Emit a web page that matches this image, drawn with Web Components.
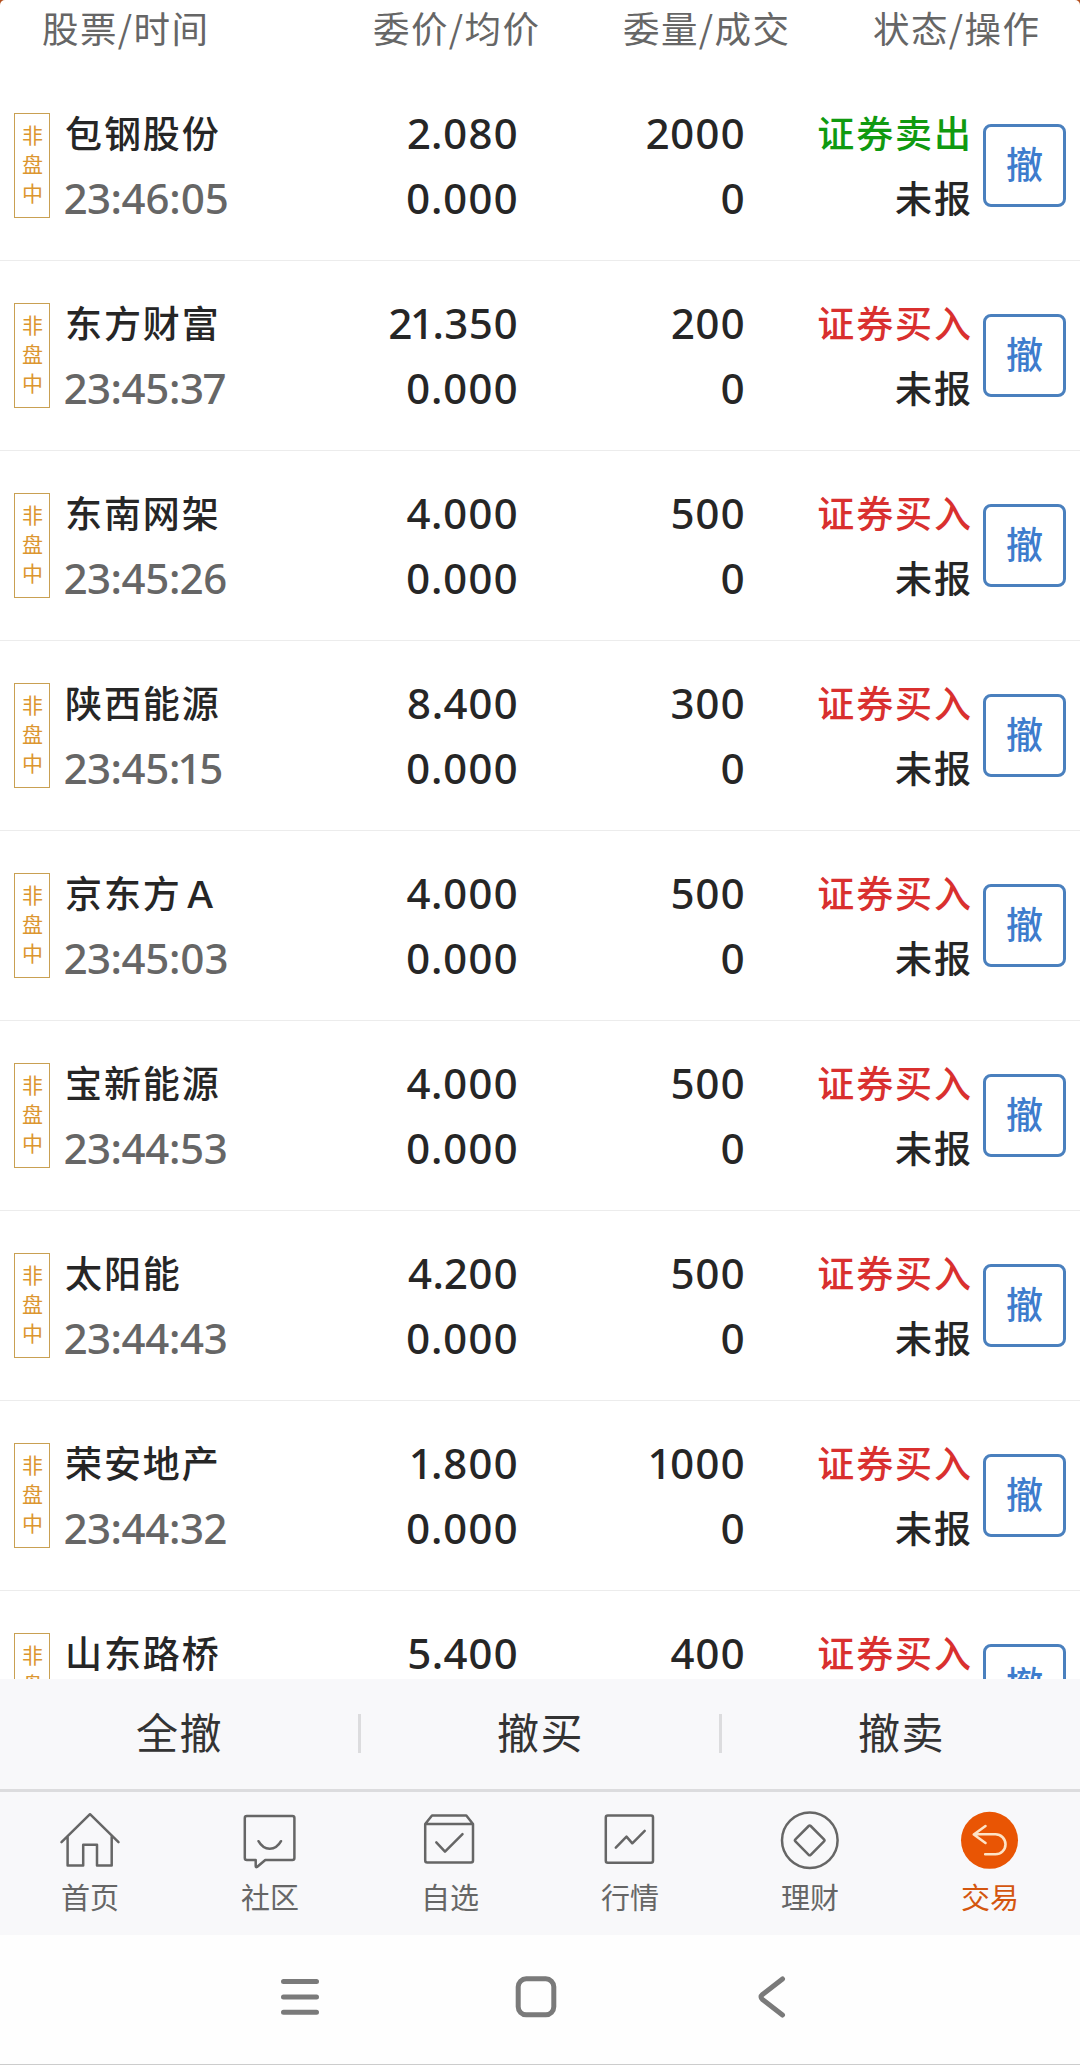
<!DOCTYPE html>
<html lang="zh-CN">
<head>
<meta charset="utf-8">
<title>撤单</title>
<style>
  body {
    margin: 0;
    background: #fff;
    font-family: "Noto Sans", "Noto Sans CJK SC", sans-serif;
  }
</style>
</head>
<body>
<cancel-page></cancel-page>

<script>
const CJK = '"Noto Sans CJK SC", sans-serif';

// the last order only shows its first line above the action bar
const ORDERS = [
  ['包钢股份', '23:46:05', '2.080', '2000', 'sell'],
  ['东方财富', '23:45:37', '21.350', '200', 'buy'],
  ['东南网架', '23:45:26', '4.000', '500', 'buy'],
  ['陕西能源', '23:45:15', '8.400', '300', 'buy'],
  ['京东方Ａ', '23:45:03', '4.000', '500', 'buy'],
  ['宝新能源', '23:44:53', '4.000', '500', 'buy'],
  ['太阳能', '23:44:43', '4.200', '500', 'buy'],
  ['荣安地产', '23:44:32', '1.800', '1000', 'buy'],
  ['山东路桥', '', '5.400', '400', 'buy']
];

const ICONS = {
  home: '<path d="M3.5 34.2 32 6.2l28.500 28M9.600 28.500v29h15.600V36.700h13.800v20.800h14.700v-29"/>',
  community: '<path d="M8.800 8h45.600q2 0 2 2v40q0 2-2 2H27.300l-8.300 7q-1.300.700-1.300-1v-6h-8.900q-2 0-2-2V10q0-2 2-2zM20.500 33.200c5.500 10 17 10 22.500 0"/>',
  watch: '<path d="M7.200 16H55v36.600q0 2-2 2H9.200q-2 0-2-2zL14 7.500h34.300L55 16M18.300 34.300l8.700 9.400 17.500-17.500"/>',
  market: '<rect x="7.800" y="7.500" width="47.200" height="47.200" rx="2"/><path d="m17.800 39.700 10.700-11 5.800 6.600 12.400-12.400"/>',
  finance: '<circle cx="31.800" cy="32.300" r="27.800"/><path d="M30.700 18q1-1 2 0L46 31.300q1 1 0 2L32.700 46.800q-1 1-2 0L17.400 33.300q-1-1 0-2z"/>',
  trade: '<circle cx="31.500" cy="32.300" r="28.500" fill="#e95504" stroke="none"/><path stroke="#fde3c6" stroke-width="2.600" d="M27.500 18 15.800 26.500 27.500 35M16 26.300h21.500a10 10 0 0 1 0 20H27.200"/>'
};

class OrderHeader extends HTMLElement {
  constructor() {
    super();
    this.attachShadow({ mode: 'open' }).innerHTML = `
      <style>
        :host { display: block; flex: none; height: 71px; background: #b4501f; }
        div {
          box-sizing: border-box;
          display: grid;
          grid-template-columns: 331px 250px 250px 1fr;
          height: 71px;
          padding: 0 0 0 42px;
          border-radius: 5px 5px 0 0;
          background: #fff;
          color: #666;
          font: 36.500px/55px ${CJK};
          letter-spacing: 1.400px;
        }
      </style>
      <div><span>股票/时间</span><span>委价/均价</span><span>委量/成交</span><span>状态/操作</span></div>
    `;
  }
}

class SessionTag extends HTMLElement {
  constructor() {
    super();
    this.attachShadow({ mode: 'open' }).innerHTML = `
      <style>
        :host {
          display: flex;
          box-sizing: border-box;
          width: 36px;
          height: 105px;
          padding: 6px 0 0 7px;
          border: 1px solid #c9a052;
          color: #dc962f;
          font: 21px/29px ${CJK};
          word-break: break-all;
        }
      </style>
      <slot></slot>
    `;
  }
}

class OrderRow extends HTMLElement {
  constructor() {
    super();
    this.attachShadow({ mode: 'open' }).innerHTML = `
      <style>
        :host {
          box-sizing: border-box;
          display: grid;
          grid-template-columns: 36px 248px 220px 227px 226px 1fr;
          height: 190px;
          padding: 0 14px;
          border-bottom: 1px solid #ececec;
          color: #262626;
          font-size: 42px;
          font-weight: 500;
          font-variant-numeric: proportional-nums;
        }
        session-tag { margin-top: 42px; }
        .cell {
          display: flex;
          flex-direction: column;
          padding-top: 29px;
          text-align: right;
          line-height: 65px;
          white-space: nowrap;
        }
        .stock { padding-left: 15px; text-align: left; }
        .price, .amount, .fill { margin-right: -0.400px; letter-spacing: 0.400px; }
        .cn { font-family: ${CJK}; font-size: 37px; letter-spacing: 1.900px; }
        .state .cn { margin-right: -1.900px; }
        .time { margin-left: -1px; color: #666; letter-spacing: -0.400px; }
        .buy { color: #d9302f; }
        .sell { color: #109a10; }
        button {
          box-sizing: border-box;
          width: 83px;
          height: 83px;
          margin: 53px 0 0 12px;
          padding: 0;
          border: 3px solid #4a80be;
          border-radius: 8px;
          background: none;
          color: #3d7ccd;
          font: 500 37px/72px ${CJK};
        }
        button span { display: block; height: 77px; }
      </style>
      <session-tag>非盘中</session-tag>
      <div class="cell stock"><span class="cn name"></span><span class="time second"></span></div>
      <div class="cell"><span class="price"></span><span class="fill second">0.000</span></div>
      <div class="cell"><span class="amount"></span><span class="fill second">0</span></div>
      <div class="cell state"><span class="cn side"></span><span class="cn second">未报</span></div>
      <button><span>撤</span></button>
    `;
  }

  set order([name, time, price, amount, side]) {
    const find = (s) => this.shadowRoot.querySelector(s);
    find('.name').textContent = name;
    find('.time').textContent = time;
    find('.price').textContent = price;
    find('.amount').textContent = amount;
    find('.side').textContent = side === 'sell' ? '证券卖出' : '证券买入';
    find('.side').classList.add(side);
    if (!time)
      this.shadowRoot.querySelectorAll('.second').forEach((el) => el.remove());
  }
}

class OrderList extends HTMLElement {
  constructor() {
    super();
    this.attachShadow({ mode: 'open' }).innerHTML = `
      <style>
        :host { display: block; flex: none; height: 1608px; overflow: hidden; }
      </style>
    `;
  }

  connectedCallback() {
    ORDERS.forEach((order) => {
      const row = document.createElement('order-row');
      row.order = order;
      this.shadowRoot.appendChild(row);
    });
  }
}

class CancelActions extends HTMLElement {
  constructor() {
    super();
    this.attachShadow({ mode: 'open' }).innerHTML = `
      <style>
        :host {
          box-sizing: border-box;
          display: flex;
          flex: none;
          align-items: center;
          height: 113px;
          padding-bottom: 1px;
          border-bottom: 3px solid #dcdcde;
          background: #f8f8fa;
          color: #333;
          font: 42px/60px ${CJK};
          letter-spacing: 1.500px;
        }
        span { flex: 1; padding: 0 0 5px 1px; text-align: center; }
        i { flex: none; width: 3px; height: 39px; background: #dcdcde; }
      </style>
      <span>全撤</span><i></i><span>撤买</span><i></i><span>撤卖</span>
    `;
  }
}

class TabItem extends HTMLElement {
  constructor() {
    super();
    this.attachShadow({ mode: 'open' });
  }

  connectedCallback() {
    this.shadowRoot.innerHTML = `
      <style>
        :host {
          display: flex;
          flex: 1;
          flex-direction: column;
          align-items: center;
          padding-top: 16px;
          color: #666;
          font: 29px/42px ${CJK};
        }
        :host([active]) { color: #d4560f; }
        svg {
          width: 64px;
          height: 64px;
          margin-bottom: 3px;
          fill: none;
          stroke: #666;
          stroke-width: 2.500;
          stroke-linejoin: round;
          stroke-linecap: round;
        }
      </style>
      <svg viewBox="0 0 64 64">${ICONS[this.getAttribute('icon')]}</svg>
      <slot></slot>
    `;
  }
}

class TabBar extends HTMLElement {
  constructor() {
    super();
    this.attachShadow({ mode: 'open' }).innerHTML = `
      <style>
        :host { display: flex; flex: none; height: 143px; background: #f8f8fa; }
      </style>
      <tab-item icon="home">首页</tab-item>
      <tab-item icon="community">社区</tab-item>
      <tab-item icon="watch">自选</tab-item>
      <tab-item icon="market">行情</tab-item>
      <tab-item icon="finance">理财</tab-item>
      <tab-item icon="trade" active>交易</tab-item>
    `;
  }
}

class SystemBar extends HTMLElement {
  constructor() {
    super();
    this.attachShadow({ mode: 'open' }).innerHTML = `
      <style>
        :host {
          box-sizing: border-box;
          display: flex;
          flex: 1;
          justify-content: center;
          gap: 188px;
          padding: 38px 8px 0 0;
          border-bottom: 1px solid #ccc;
          background: #fefefe;
        }
        svg {
          width: 48px;
          height: 48px;
          fill: none;
          stroke: #7a7a7a;
          stroke-width: 5;
          stroke-linecap: round;
          stroke-linejoin: round;
        }
      </style>
      <svg viewBox="0 0 48 48"><path d="M7.500 8.500h33M7.500 24h33M7.500 39.200h33"/></svg>
      <svg viewBox="0 0 48 48"><rect x="6.200" y="5.800" width="35.600" height="36" rx="8"/></svg>
      <svg viewBox="0 0 48 48"><path d="M34.500 6 14.500 21.500q-3 2.500 0 5L34.500 42"/></svg>
    `;
  }
}

class CancelPage extends HTMLElement {
  constructor() {
    super();
    this.attachShadow({ mode: 'open' }).innerHTML = `
      <style>
        :host {
          display: flex;
          flex-direction: column;
          width: 1080px;
          height: 2065px;
          overflow: hidden;
          background: #fff;
        }
      </style>
      <order-header></order-header>
      <order-list></order-list>
      <cancel-actions></cancel-actions>
      <tab-bar></tab-bar>
      <system-bar></system-bar>
    `;
  }
}

customElements.define('order-header', OrderHeader);
customElements.define('session-tag', SessionTag);
customElements.define('order-row', OrderRow);
customElements.define('order-list', OrderList);
customElements.define('cancel-actions', CancelActions);
customElements.define('tab-item', TabItem);
customElements.define('tab-bar', TabBar);
customElements.define('system-bar', SystemBar);
customElements.define('cancel-page', CancelPage);
</script>
</body>
</html>
